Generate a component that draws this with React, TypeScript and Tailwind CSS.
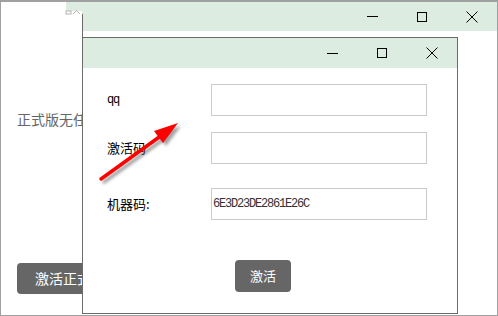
const cjk = { fontFamily: '"Noto Sans CJK SC", "Noto Sans", sans-serif' };
const mono = { fontFamily: '"Liberation Mono", "DejaVu Sans Mono", monospace' };

const Controls = () => (
  <div className="flex h-full justify-end">
    <div className="flex w-[50px] items-center justify-center">
      <div className="h-px w-[11px] bg-black" />
    </div>
    <div className="flex w-[50px] items-center justify-center">
      <div className="h-[10px] w-[10px] border border-black" />
    </div>
    <div className="flex w-[50px] items-center justify-center">
      <svg width="12" height="12" viewBox="0 0 12 12">
        <path d="M0.5 0.5 L11.5 11.5 M11.5 0.5 L0.5 11.5" stroke="#000" strokeWidth="1" fill="none" />
      </svg>
    </div>
  </div>
);

const Field = ({ label, value, labelMono }: { label: string; value?: string; labelMono?: boolean }) => (
  <div className="flex items-center">
    <div
      className={labelMono ? "w-[104px] text-[12px] tracking-[-1.2px] text-black" : "w-[104px] text-[13px] text-black"}
      style={labelMono ? mono : cjk}
    >
      {label}
    </div>
    <div className="flex h-[32px] w-[216px] items-center border border-[#c9c9ce] bg-white px-[1px]">
      {value && (
        <span className="text-[12px] tracking-[-1.2px] text-[#333]" style={mono}>
          {value}
        </span>
      )}
    </div>
  </div>
);

const Arrow = () => (
  <svg className="pointer-events-none absolute left-0 top-0" width="498" height="316" viewBox="0 0 498 316">
    <defs>
      <filter id="sh" x="-20%" y="-20%" width="140%" height="140%">
        <feGaussianBlur stdDeviation="1.4" />
      </filter>
    </defs>
    <g filter="url(#sh)" opacity="0.55" transform="translate(3 3)">
      <line x1="101" y1="179" x2="162" y2="135" stroke="#555" strokeWidth="3.5" strokeLinecap="round" />
      <polygon points="178,123 154,131 163,143" fill="#555" />
    </g>
    <line x1="101" y1="179" x2="162" y2="135" stroke="#ff0000" strokeWidth="3.5" strokeLinecap="round" />
    <polygon points="178,123 154,131 163,143" fill="#ff0000" />
  </svg>
);

export default function App() {
  return (
    <div className="relative h-[316px] w-[498px] overflow-hidden border border-t-2 border-[#a0a0a0] bg-white" style={cjk}>
      {/* outer window */}
      <div className="h-[29px] bg-[#dcece0]">
        <Controls />
      </div>
      <div className="flex flex-col items-start pl-[16px]">
        <div className="mt-[78px] text-[14px] leading-[20px] text-[#666]">正式版无任何限制</div>
        <button className="mt-[134px] h-[31px] w-[106px] rounded-[4px] bg-[#666] text-[14px] text-white">
          激活正式版
        </button>
      </div>

      {/* covered strip at top left */}
      <div className="absolute left-0 top-0 h-[9px] w-[65px] bg-white" />
      <div className="absolute left-0 top-[9px] h-[20px] w-[81px] bg-white" />
      <svg className="absolute left-[64px] top-[7px]" width="18" height="6" viewBox="0 0 18 6">
        <rect x="1" y="2" width="5" height="3" fill="none" stroke="#b5b5b5" strokeWidth="1" />
        <path d="M8 5 L11.5 1.5 L15 5" fill="none" stroke="#b5b5b5" strokeWidth="1" />
      </svg>
      <div className="absolute left-[81px] top-[12px] h-[24px] w-px bg-[#6b6b6b]" />

      {/* inner window */}
      <div className="absolute left-[81px] top-[35px] flex h-[277px] w-[376px] flex-col border border-[#6b6b6b] bg-white">
        <div className="h-[30px] bg-[#dcece0]">
          <Controls />
        </div>
        <div className="flex flex-col items-start pl-[24px] pt-[16px]">
          <Field label="qq" labelMono />
          <div className="mt-[16px]">
            <Field label="激活码" />
          </div>
          <div className="mt-[24px]">
            <Field label="机器码:" value="6E3D23DE2861E26C" />
          </div>
          <button className="ml-[128px] mt-[40px] h-[32px] w-[56px] rounded-[4px] bg-[#666] text-[13px] text-white">
            激活
          </button>
        </div>
      </div>

      <div className="absolute -left-px -top-[2px]">
        <Arrow />
      </div>
    </div>
  );
}
